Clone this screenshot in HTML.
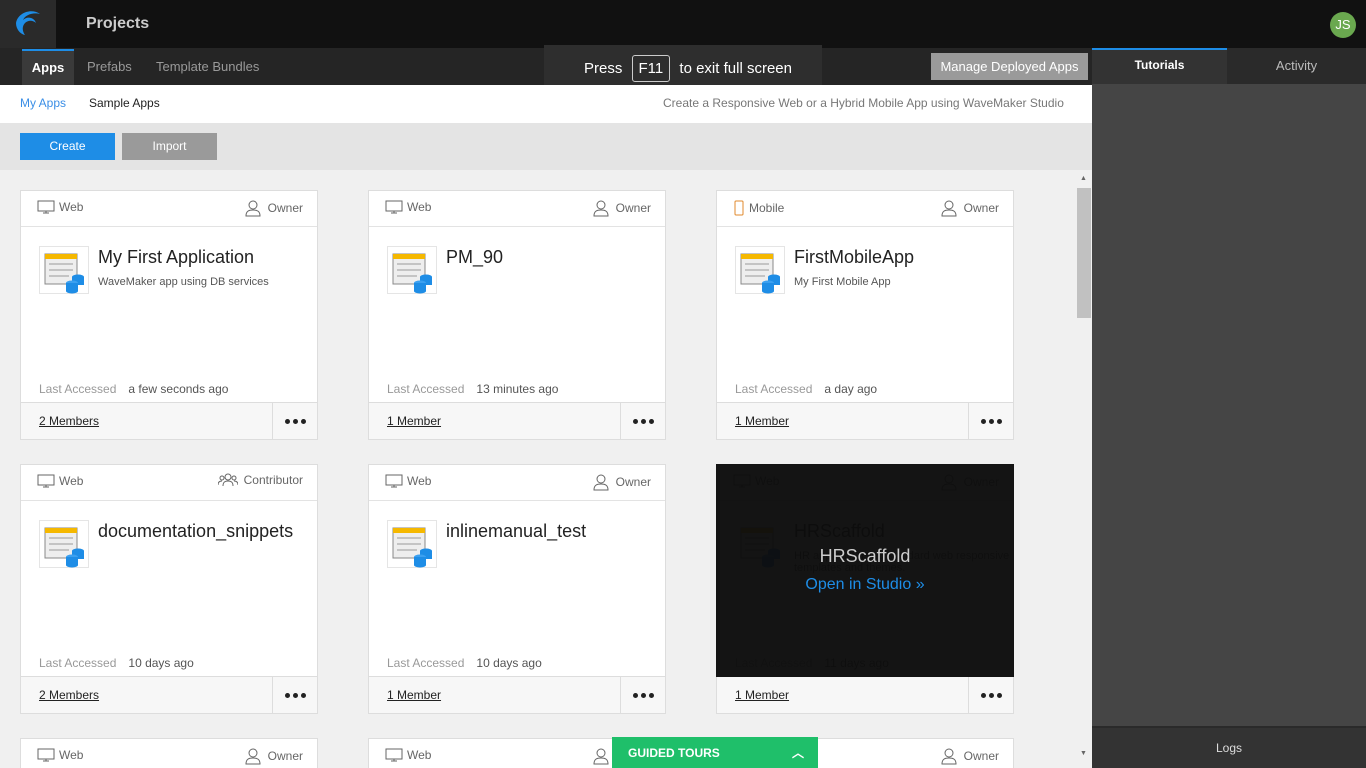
<!DOCTYPE html><html><head><style>
*{box-sizing:border-box;margin:0;padding:0}
html,body{width:1366px;height:768px;overflow:hidden}
body{font-family:"Liberation Sans",sans-serif;background:#f0f0f0;position:relative;font-size:12px}
.a{position:absolute}
#cards{position:absolute;left:0;top:170px;width:1076px;height:598px;overflow:hidden}
.card{position:absolute;width:298px;height:250px;background:#fff;border:1px solid #ddd}
.hd{height:36px;border-bottom:1px solid #e3e3e3;color:#666;font-size:12px;position:relative}
.hd .l{position:absolute;left:16px;top:9px;display:flex;align-items:center;gap:4px}
.hd .r{position:absolute;right:14px;top:8px;display:flex;align-items:center;gap:6px}
.ic{position:absolute;left:18px;top:55px;width:50px;height:48px;border:1px solid #e5e5e5;background:#fff}
.tt{position:absolute;left:77px;top:56px;font-size:18px;color:#222}
.ds{position:absolute;left:77px;top:85px;font-size:11px;color:#555}
.la{position:absolute;left:18px;top:191px;font-size:12px;color:#999}
.la span{color:#555;margin-left:12px}
.ft{position:absolute;left:0;right:0;bottom:0;height:37px;border-top:1px solid #ddd;background:#f7f7f7}
.ft .m{position:absolute;left:18px;top:11px;color:#222;text-decoration:underline;font-size:12px}
.ft .d{position:absolute;right:0;top:0;width:45px;height:36px;border-left:1px solid #ddd;display:flex;justify-content:center;align-items:center;gap:3px}
.ft .d i{width:5px;height:5px;border-radius:50%;background:#222;display:block}
</style></head><body>
<div class="a" style="left:0;top:0;width:1366px;height:48px;background:#111"></div>
<div class="a" style="left:0;top:0;width:56px;height:48px;background:#2a2a2a"></div>
<svg class="a" style="left:14px;top:10px" width="28" height="26" viewBox="0 0 28 26"><path d="M26 4C18-2 4 2 2 13c0 6 4 11 9 12-3-4-3-9 0-12 3-3 8-3 11 0-2-6-9-7-13-3 2-5 10-8 17-6z" fill="#1e8de6"/></svg>
<div class="a" style="left:86px;top:15px;color:#ccc;font-size:16px;font-weight:bold">Projects</div>
<div class="a" style="left:1330px;top:12px;width:26px;height:26px;border-radius:50%;background:#6aa84f;color:#fff;font-size:13px;text-align:center;line-height:26px">JS</div>
<div class="a" style="left:0;top:48px;width:1092px;height:37px;background:#252525"></div>
<div class="a" style="left:22px;top:49px;width:52px;height:36px;background:#3a3a3a;border-top:2px solid #1e8de6;color:#fff;font-weight:bold;font-size:13px;text-align:center;line-height:34px">Apps</div>
<div class="a" style="left:87px;top:59px;color:#999;font-size:13px">Prefabs</div>
<div class="a" style="left:156px;top:59px;color:#999;font-size:13px">Template Bundles</div>
<div class="a" style="left:931px;top:53px;width:157px;height:27px;background:#9a9a9a;color:#fff;font-size:13px;text-align:center;line-height:27px">Manage Deployed Apps</div>
<div class="a" style="left:544px;top:45px;width:278px;height:48px;background:#2e2e2e;color:#fff;font-size:15px;line-height:48px;padding-left:40px">Press <span style="border:1px solid #ccc;border-radius:3px;padding:4px 6px;margin:0 5px">F11</span> to exit full screen</div>
<div class="a" style="left:0;top:85px;width:1092px;height:38px;background:#fff"></div>
<div class="a" style="left:20px;top:96px;color:#3a8ee6">My Apps</div>
<div class="a" style="left:89px;top:96px;color:#222">Sample Apps</div>
<div class="a" style="left:663px;top:96px;color:#777">Create a Responsive Web or a Hybrid Mobile App using WaveMaker Studio</div>
<div class="a" style="left:0;top:123px;width:1092px;height:47px;background:#e4e4e4"></div>
<div class="a" style="left:20px;top:133px;width:95px;height:27px;background:#1e8de6;color:#fff;text-align:center;line-height:27px">Create</div>
<div class="a" style="left:122px;top:133px;width:95px;height:27px;background:#9a9a9a;color:#fff;text-align:center;line-height:27px">Import</div>
<div class="a" style="left:1077px;top:188px;width:14px;height:130px;background:#c1c1c1"></div>
<div class="a" style="left:1080px;top:175px;font-size:7px;color:#666">▲</div>
<div class="a" style="left:1080px;top:750px;font-size:7px;color:#666">▼</div>

<div id="cards"></div>
<script>
const mon='<svg width="18" height="14" viewBox="0 0 18 14"><rect x="1" y="1" width="16" height="10" fill="none" stroke="#666"/><path d="M6 13h6M9 11v2" stroke="#666"/></svg>';
const mob='<svg width="12" height="16"><rect x="2" y="1" width="8" height="14" rx="1" fill="none" stroke="#e08a2e"/></svg>';
const usr='<svg width="18" height="18" viewBox="0 0 18 18"><circle cx="9" cy="6" r="4" fill="none" stroke="#666"/><path d="M2 17c0-5 3-6 7-6s7 1 7 6z" fill="none" stroke="#666"/></svg>';
const grp='<svg width="20" height="14" viewBox="0 0 20 14"><circle cx="10" cy="4" r="3" fill="none" stroke="#666"/><circle cx="4" cy="5" r="2" fill="none" stroke="#666"/><circle cx="16" cy="5" r="2" fill="none" stroke="#666"/><path d="M5 13c0-4 2-5 5-5s5 1 5 5M0 12c0-3 2-4 4-4M20 12c0-3-2-4-4-4" fill="none" stroke="#666"/></svg>';
const app='<svg width="50" height="48" viewBox="0 0 50 48"><rect x="5" y="7" width="32" height="30" fill="#eee" stroke="#888"/><rect x="5" y="7" width="32" height="5" fill="#f5b800"/><path d="M9 17h24M9 23h24M9 29h20" stroke="#999"/><ellipse cx="38" cy="30" rx="6" ry="2.5" fill="#1e8de6"/><rect x="32" y="30" width="12" height="8" fill="#1e8de6"/><ellipse cx="32" cy="36" rx="6" ry="2.5" fill="#3ba0f0"/><rect x="26" y="36" width="12" height="8" fill="#1e8de6"/><ellipse cx="32" cy="44" rx="6" ry="2.5" fill="#1e8de6"/></svg>';
const C=[[20,20,'Web','Owner','My First Application','WaveMaker app using DB services','a few seconds ago','2 Members'],
[368,20,'Web','Owner','PM_90','','13 minutes ago','1 Member'],
[716,20,'Mobile','Owner','FirstMobileApp','My First Mobile App','a day ago','1 Member'],
[20,294,'Web','Contributor','documentation_snippets','','10 days ago','2 Members'],
[368,294,'Web','Owner','inlinemanual_test','','10 days ago','1 Member'],
[716,294,'Web','Owner','HRScaffold','HR app built using standard web responsive templates and themes.','11 days ago','1 Member'],
[20,568,'Web','Owner','','','',''],[368,568,'Web','Owner','','','',''],[716,568,'Web','Owner','','','','']];
let h='';
C.forEach((c,i)=>{h+=`<div class="card" style="left:${c[0]}px;top:${c[1]}px"><div class="hd"><div class="l">${c[2]=='Mobile'?mob:mon}${c[2]}</div><div class="r">${c[3]=='Contributor'?grp:usr}${c[3]}</div></div>`;
if(c[4]){h+=`<div class="ic">${app}</div><div class="tt">${c[4]}</div><div class="ds">${c[5]}</div><div class="la">Last Accessed<span>${c[6]}</span></div><div class="ft"><div class="m">${c[7]}</div><div class="d"><i></i><i></i><i></i></div></div>`;}
if(i==5){h+=`<div style="position:absolute;left:-1px;top:-1px;width:298px;height:213px;background:rgba(12,12,12,.97)"><div style="position:absolute;width:100%;text-align:center;top:82px;color:#ccc;font-size:18px">HRScaffold</div><div style="position:absolute;width:100%;text-align:center;top:112px;color:#1e8de6;font-size:16px">Open in Studio »</div></div>`;}
h+='</div>';});
document.getElementById('cards').innerHTML=h;
</script>
<div class="a" style="left:612px;top:737px;width:206px;height:31px;background:#1fbf6a;color:#fff;font-weight:bold;font-size:12px;line-height:33px;padding-left:16px">GUIDED TOURS<span style="position:absolute;right:14px;top:0">︿</span></div>
<div class="a" style="left:1092px;top:48px;width:274px;height:720px;background:#454545"></div>
<div class="a" style="left:1092px;top:48px;width:135px;height:36px;background:#333;border-top:2px solid #1e8de6;color:#fff;font-weight:bold;font-size:12px;text-align:center;line-height:31px">Tutorials</div>
<div class="a" style="left:1227px;top:48px;width:139px;height:36px;background:#2a2a2a;color:#bbb;font-size:13px;text-align:center;line-height:36px">Activity</div>
<div class="a" style="left:1092px;top:726px;width:274px;height:42px;background:#333;border-top:2px solid #2a2a2a;color:#ddd;font-size:12px;text-align:center;line-height:40px">Logs</div>
</body></html>
